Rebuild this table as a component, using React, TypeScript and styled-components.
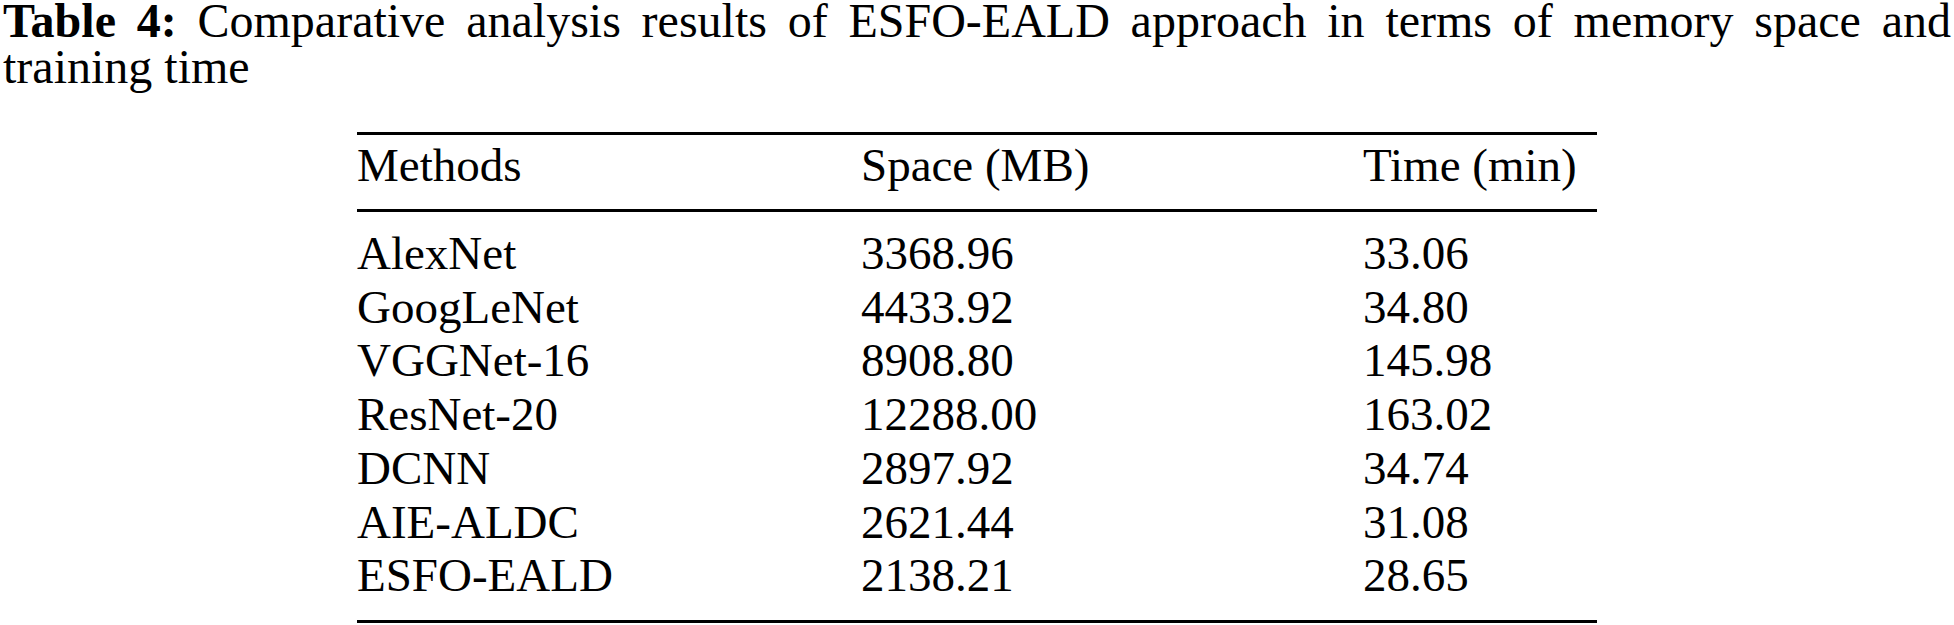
import React from "react";
import styled, { createGlobalStyle } from "styled-components";

const GlobalStyle = createGlobalStyle`
  html, body {
    margin: 0;
    padding: 0;
    background: #ffffff;
  }
  body {
    font-family: "Liberation Serif", "Times New Roman", serif;
    color: #000000;
  }
`;

type Row = { method: string; space: string; time: string };

const rows: Row[] = [
  { method: "AlexNet", space: "3368.96", time: "33.06" },
  { method: "GoogLeNet", space: "4433.92", time: "34.80" },
  { method: "VGGNet-16", space: "8908.80", time: "145.98" },
  { method: "ResNet-20", space: "12288.00", time: "163.02" },
  { method: "DCNN", space: "2897.92", time: "34.74" },
  { method: "AIE-ALDC", space: "2621.44", time: "31.08" },
  { method: "ESFO-EALD", space: "2138.21", time: "28.65" },
];

const App = () => {
  return (
    <Page>
      <GlobalStyle />
      <Caption>
        <Label>Table 4:</Label> Comparative analysis results of ESFO-EALD approach in terms of memory space and
        training time
      </Caption>
      <Table>
        <HeadRow>
          <Cell>Methods</Cell>
          <Cell>Space (MB)</Cell>
          <Cell>Time (min)</Cell>
        </HeadRow>
        <Body>
          {rows.map((r) => (
            <BodyRow key={r.method}>
              <Cell>{r.method}</Cell>
              <Cell>{r.space}</Cell>
              <Cell>{r.time}</Cell>
            </BodyRow>
          ))}
        </Body>
      </Table>
    </Page>
  );
};

export default App;

const Page = styled.div`
  width: 1954px;
  height: 625px;
  box-sizing: border-box;
  padding: 0 3px;
  overflow: hidden;
`;

const Caption = styled.p`
  margin: -2px 0 0;
  font-size: 48px;
  line-height: 46px;
  text-align: justify;
`;

const Label = styled.span`
  font-weight: bold;
`;

const Table = styled.div`
  width: 1240px;
  margin: 42px auto 0;
  border-top: 3px solid #000;
  border-bottom: 3px solid #000;
  font-size: 47px;
`;

const Grid = styled.div`
  display: grid;
  grid-template-columns: 504px 502px 1fr;
  line-height: 53.75px;
`;

const HeadRow = styled(Grid)`
  padding: 4px 0 16px;
  border-bottom: 3px solid #000;
`;

const Body = styled.div`
  padding: 15px 0 17px;
`;

const BodyRow = styled(Grid)``;

const Cell = styled.div`
  white-space: nowrap;
`;
